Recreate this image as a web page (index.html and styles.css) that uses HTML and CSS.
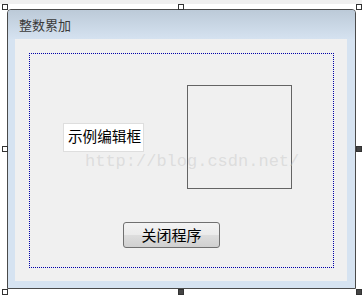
FILE: index.html
```html
<html>
<head>
    <title>整数累加</title>
    <link rel="stylesheet" href="styles.css">
</head>
<body>
    <div class="stage">
        <div class="topband"></div>
        <div class="window">
            <div class="titlebar">整数累加</div>
            <div class="client">
                <div class="canvas">
                    <div class="row">
                        <div class="editbox">示例编辑框</div>
                        <div class="picbox"></div>
                    </div>
                    <button class="btn">关闭程序</button>
                </div>
            </div>
        </div>
        <div class="watermark">http://blog.csdn.net/</div>
        <!-- resize handles -->
        <span class="handle h-tl"></span>
        <span class="handle h-tm"></span>
        <span class="handle h-tr"></span>
        <span class="handle h-ml"></span>
        <span class="handle solid h-mr"></span>
        <span class="handle h-bl"></span>
        <span class="handle solid h-bm"></span>
        <span class="handle solid h-br"></span>
    </div>
</body>
</html>
```

FILE: styles.css
```css
body {
    margin: 0;
    background: #ffffff;
    font-family: "Noto Sans CJK SC", "Liberation Sans", sans-serif;
}
.stage {
    position: relative;
    width: 362px;
    height: 301px;
    overflow: hidden;
}
.topband {
    height: 4px;
    background: #f0f0f0;
}
.window {
    box-sizing: border-box;
    margin: 5px 0 0 7px;
    width: 349px;
    height: 280px;
    border: 1px solid #4a4a4a;
    border-radius: 4px 4px 0 0;
    background: #d6e3f1;
    display: flex;
    flex-direction: column;
}
.titlebar {
    height: 29px;
    padding-left: 11px;
    background: linear-gradient(to bottom, #bccad8, #d5e2f0);
    border-radius: 3px 3px 0 0;
    color: #3a3a3a;
    font-size: 13px;
    line-height: 29px;
}
.client {
    flex: 1;
    margin: 0 8px 7px 7px;
    background: #f0f0f0;
    padding: 14px 13px 13px 14px;
    display: flex;
}
.canvas {
    flex: 1;
    border: 1px dotted #0000a8;
    padding: 31px 0 0 33px;
}
.row {
    display: flex;
    align-items: flex-start;
}
.editbox {
    box-sizing: border-box;
    margin-top: 38px;
    width: 81px;
    height: 29px;
    border: 1px solid #dedede;
    background: #ffffff;
    padding-left: 4px;
    font-size: 14.6px;
    line-height: 24px;
    color: #000;
    white-space: nowrap;
}
.picbox {
    box-sizing: border-box;
    margin-left: 43px;
    width: 105px;
    height: 104px;
    border: 1px solid #646464;
}
.btn {
    display: block;
    box-sizing: border-box;
    margin: 33px 0 0 60px;
    width: 97px;
    height: 26px;
    border: 1px solid #707070;
    border-radius: 3px;
    background: linear-gradient(to bottom, #f3f3f3, #ebebeb 48%, #dddddd 52%, #d0d0d0);
    font-family: "Noto Sans CJK SC", sans-serif;
    font-size: 15px;
    color: #000;
    padding: 0;
    line-height: 22px;
}
.watermark {
    position: absolute;
    left: 85px;
    top: 153px;
    font-family: "Liberation Mono", monospace;
    font-size: 17px;
    line-height: 17px;
    color: rgba(190, 190, 190, 0.4);
    pointer-events: none;
}
.handle {
    position: absolute;
    box-sizing: border-box;
    width: 6px;
    height: 6px;
    border: 1px solid #333;
    background: #fff;
}
.handle.solid {
    background: #444;
}
.h-tl { left: 2px; top: 4px; }
.h-tm { left: 178px; top: 4px; }
.h-tr { left: 356px; top: 4px; }
.h-ml { left: 2px; top: 146px; }
.h-mr { left: 356px; top: 146px; }
.h-bl { left: 2px; top: 289px; }
.h-bm { left: 178px; top: 289px; }
.h-br { left: 356px; top: 289px; }
```
